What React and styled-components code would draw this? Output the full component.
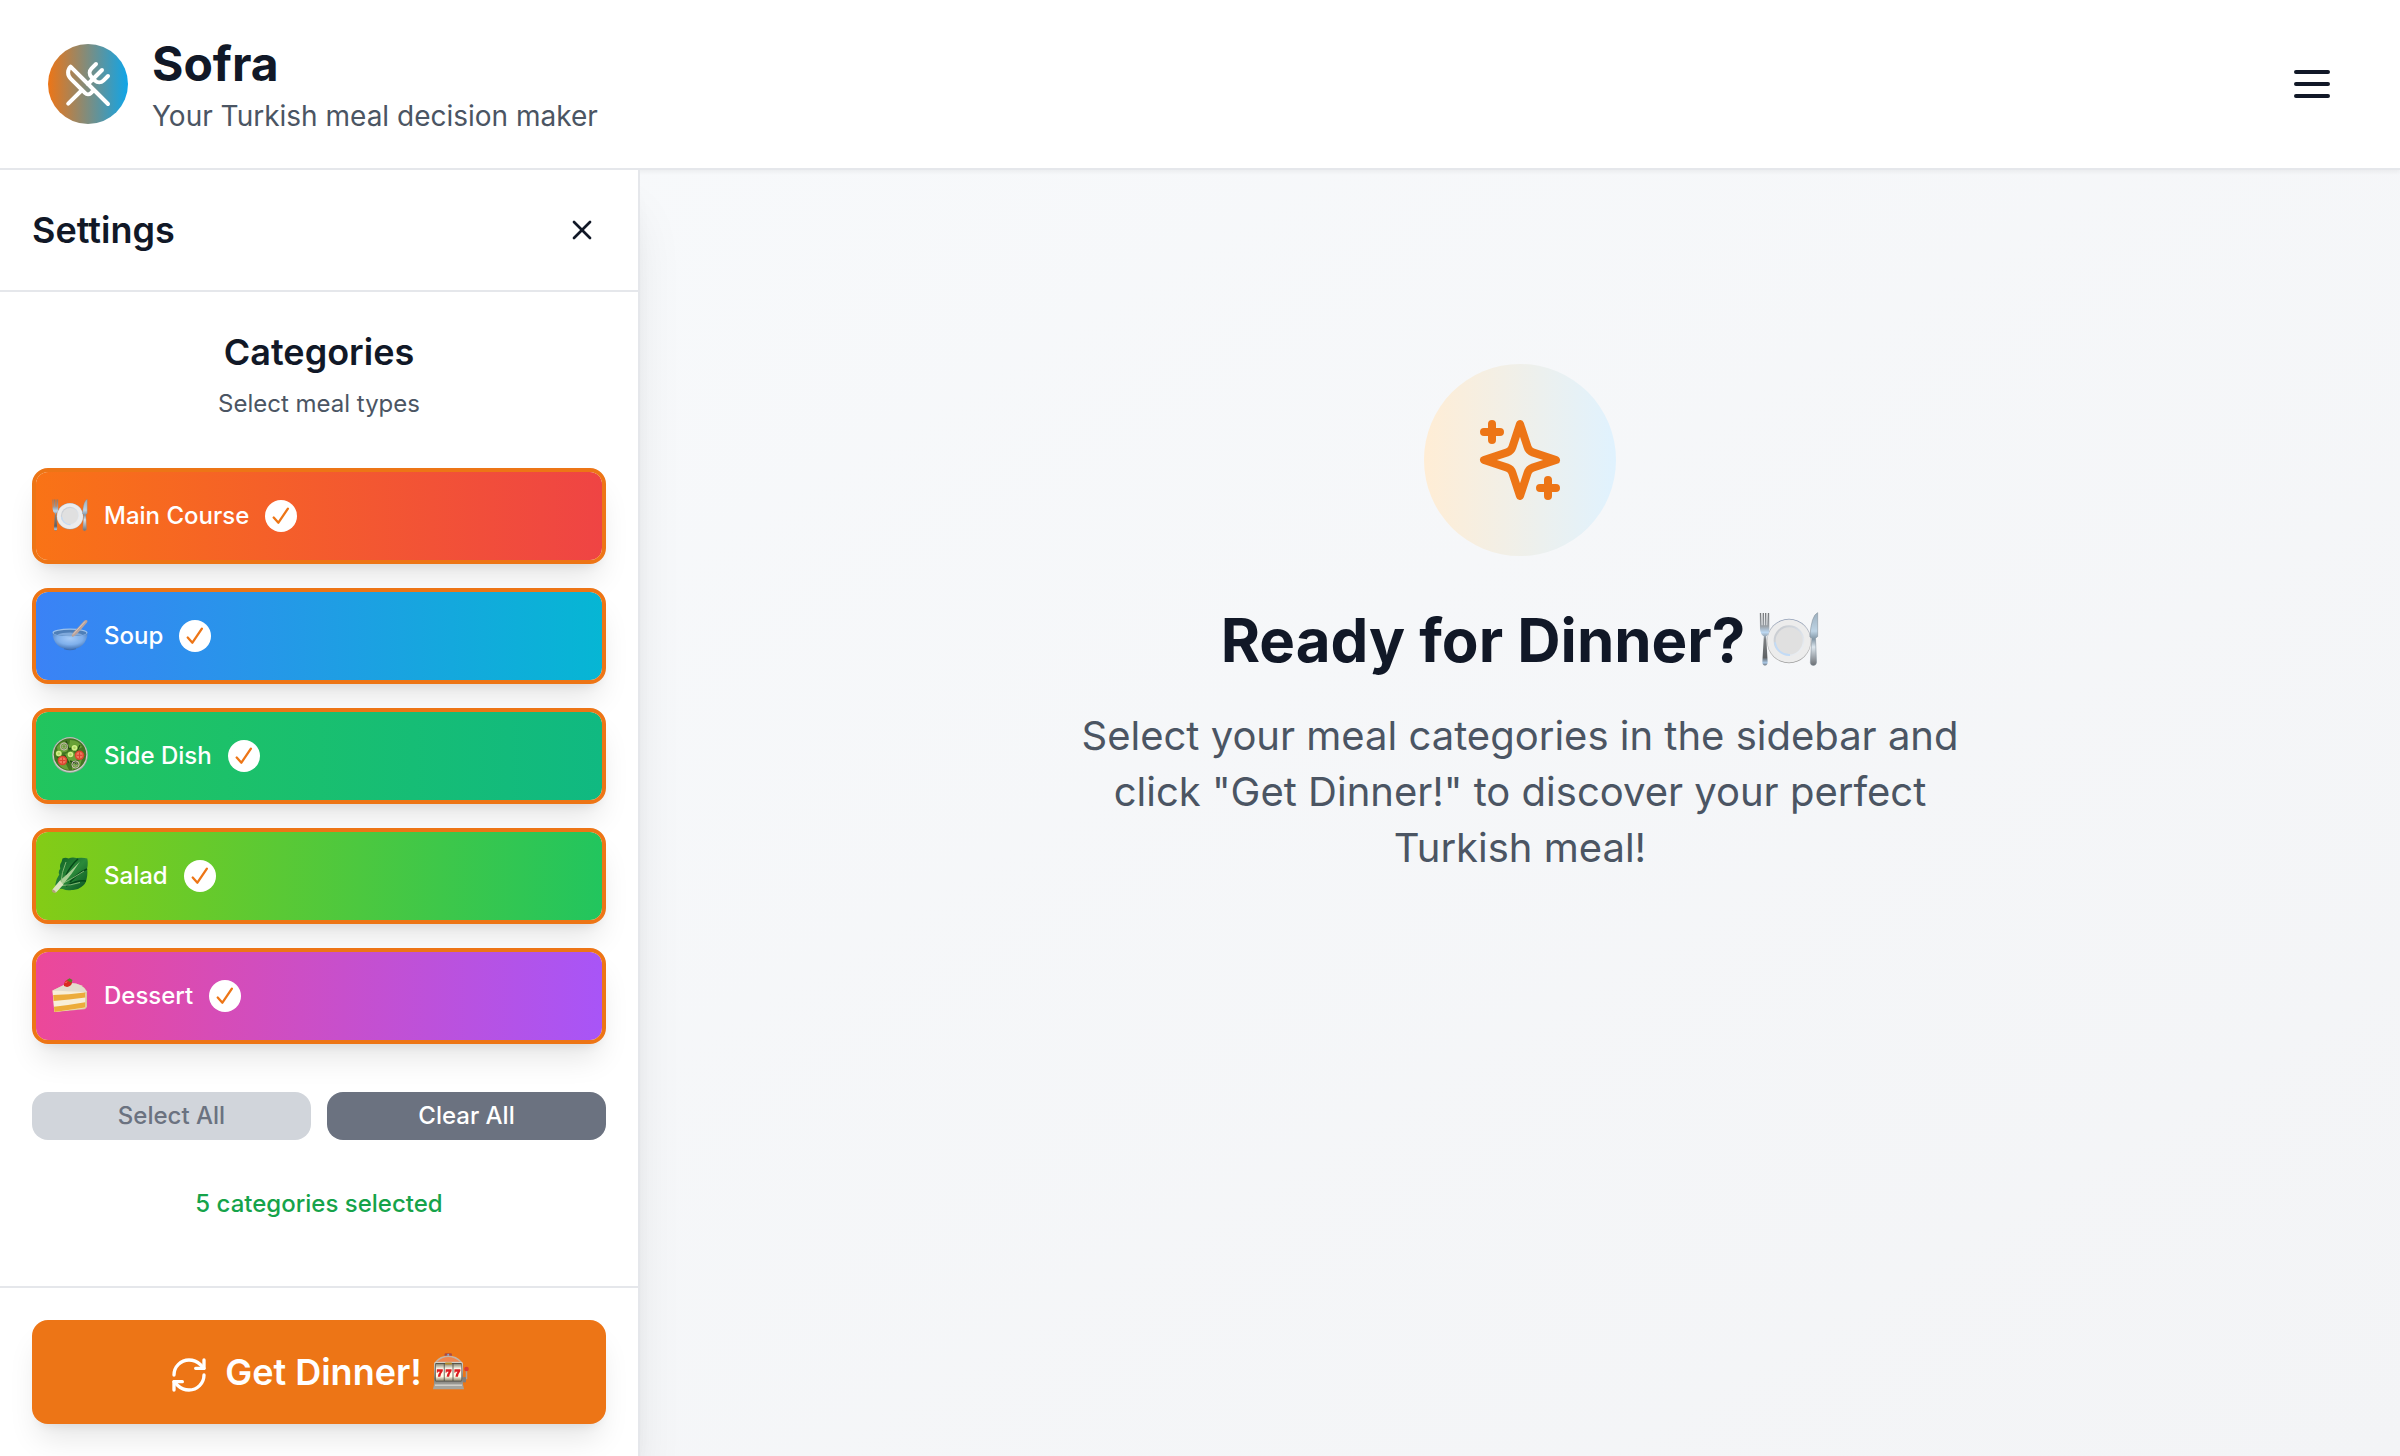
import React from "react";
import styled, { createGlobalStyle } from "styled-components";
import { UtensilsCrossed, X, RefreshCw } from "lucide-react";

const ORANGE = "#ed7516";
const INK = "#111827";
const LINE = "#e5e7eb";
const SHADOW_LG = "0 20px 30px -6px rgba(0, 0, 0, 0.1), 0 8px 12px -8px rgba(0, 0, 0, 0.1)";
const SHADOW_XL = "0 40px 50px -10px rgba(0, 0, 0, 0.1), 0 16px 20px -12px rgba(0, 0, 0, 0.1)";

const GlobalStyle = createGlobalStyle`
  *, *::before, *::after { box-sizing: border-box; }
  body {
    margin: 0;
    font-family: Inter, "Liberation Sans", sans-serif;
    color: ${INK};
    background: #f8fafc;
  }
  h1, h2, h3, p { margin: 0; }
  button { font: inherit; border: 0; cursor: pointer; }
  svg { display: block; flex-shrink: 0; }
`;

const Page = styled.div`
  display: flex;
  flex-direction: column;
  height: 1456px;
  overflow: hidden;
  background: linear-gradient(to bottom right, #f8fafc, #f3f4f6);
`;

const Header = styled.header`
  display: flex;
  align-items: center;
  justify-content: space-between;
  height: 170px;
  flex-shrink: 0;
  padding: 0 48px;
  background: #fff;
  border-bottom: 2px solid ${LINE};
  box-shadow: 0 2px 4px rgba(0, 0, 0, 0.05);
`;

const Brand = styled.div`
  display: flex;
  align-items: center;
  gap: 24px;
`;

const Logo = styled.div`
  display: grid;
  place-items: center;
  width: 80px;
  height: 80px;
  border-radius: 50%;
  color: #fff;
  background: linear-gradient(to right, ${ORANGE}, #0ea5e9);
`;

const Title = styled.h1`
  font-size: 48px;
  line-height: 64px;
  font-weight: 700;
`;

const Tagline = styled.p`
  font-size: 28px;
  line-height: 40px;
  color: #4b5563;
`;

const IconButton = styled.button`
  display: grid;
  place-items: center;
  padding: ${(p) => p.$pad}px;
  color: ${INK};
  background: transparent;
`;

const Body = styled.div`
  display: flex;
  flex: 1;
  min-height: 0;
`;

const Sidebar = styled.aside`
  display: flex;
  flex-direction: column;
  width: 640px;
  flex-shrink: 0;
  background: #fff;
  border-right: 2px solid ${LINE};
  box-shadow: ${SHADOW_XL};
`;

const SidebarHeader = styled.div`
  display: flex;
  align-items: center;
  justify-content: space-between;
  height: 122px;
  padding: 0 32px;
  border-bottom: 2px solid ${LINE};
`;

const SidebarTitle = styled.h2`
  font-size: 36px;
  line-height: 56px;
  font-weight: 600;
`;

const SidebarContent = styled.div`
  display: flex;
  flex-direction: column;
  flex: 1;
  padding: 32px 32px 0;
`;

const Intro = styled.div`
  text-align: center;
  margin-bottom: 48px;
`;

const IntroTitle = styled.h3`
  font-size: 36px;
  line-height: 56px;
  font-weight: 600;
`;

const IntroText = styled.p`
  margin-top: 8px;
  font-size: 24px;
  line-height: 32px;
  color: #4b5563;
`;

const CategoryList = styled.div`
  display: flex;
  flex-direction: column;
  gap: 24px;
`;

const CategoryCard = styled.button`
  display: flex;
  align-items: center;
  gap: 16px;
  height: 96px;
  padding: 0 16px;
  border: 4px solid ${ORANGE};
  border-radius: 16px;
  color: #fff;
  background: linear-gradient(to right, ${(p) => p.$from}, ${(p) => p.$to}) padding-box;
  box-shadow: ${SHADOW_LG};
`;

const CategoryIcon = styled.span`
  width: 36px;
  height: 36px;
  margin-bottom: 2px;
`;

const CategoryName = styled.span`
  font-size: 24px;
  line-height: 32px;
  font-weight: 500;
`;

const CheckBadge = styled.span`
  display: grid;
  place-items: center;
  width: 32px;
  height: 32px;
  border-radius: 50%;
  color: ${ORANGE};
  background: #fff;
`;

const Actions = styled.div`
  display: flex;
  gap: 16px;
  margin-top: 48px;
`;

const ActionButton = styled.button`
  flex: 1;
  height: 48px;
  padding: 0;
  border-radius: 16px;
  font-size: 24px;
  line-height: 32px;
  font-weight: 500;
  color: ${(p) => (p.$muted ? "#6b7280" : "#fff")};
  background: ${(p) => (p.$muted ? "#d1d5db" : "#6b7280")};
`;

const Count = styled.p`
  margin-top: 48px;
  text-align: center;
  font-size: 24px;
  line-height: 32px;
  font-weight: 500;
  color: #16a34a;
`;

const SidebarFooter = styled.div`
  padding: 32px;
  border-top: 2px solid ${LINE};
`;

const DinnerButton = styled.button`
  display: flex;
  align-items: center;
  justify-content: center;
  width: 100%;
  height: 104px;
  padding: 0;
  border-radius: 16px;
  font-size: 36px;
  line-height: 56px;
  font-weight: 600;
  color: #fff;
  background: ${ORANGE};
  box-shadow: ${SHADOW_LG};

  > svg:first-child { margin: 6px 16px 0 0; }
  > svg:last-child { margin: 0 0 2px 11px; }
`;

const Main = styled.main`
  display: flex;
  flex-direction: column;
  align-items: center;
  flex: 1;
  padding-top: 194px;
`;

const Spark = styled.div`
  display: grid;
  place-items: center;
  width: 192px;
  height: 192px;
  border-radius: 50%;
  color: ${ORANGE};
  background: linear-gradient(to right, #ffedd5, #e0f2fe);
`;

const Hero = styled.h2`
  display: flex;
  align-items: center;
  gap: 14px;
  margin-top: 48px;
  font-size: 60px;
  line-height: 72px;
  font-weight: 700;

  > svg { margin-bottom: 3px; }
`;

const Lead = styled.p`
  width: 896px;
  margin-top: 32px;
  text-align: center;
  font-size: 40px;
  line-height: 56px;
  color: #4b5563;
`;

function PlateEmoji({ size = 36 }) {
  return (
    <svg width={size} height={size} viewBox="0 0 36 36">
      <defs>
        <linearGradient id="metal" x1="0" y1="0" x2="0" y2="1">
          <stop offset="0" stopColor="#77797b" />
          <stop offset="0.25" stopColor="#9aa0a6" />
          <stop offset="0.37" stopColor="#bcd8f2" />
          <stop offset="0.5" stopColor="#7d8083" />
          <stop offset="0.85" stopColor="#5f6265" />
          <stop offset="0.95" stopColor="#a9c8e6" />
          <stop offset="1" stopColor="#6d7278" />
        </linearGradient>
        <linearGradient id="blade" x1="0" y1="0" x2="0" y2="1">
          <stop offset="0" stopColor="#9db0bf" />
          <stop offset="0.35" stopColor="#bdd3e4" />
          <stop offset="0.5" stopColor="#8296a5" />
          <stop offset="0.65" stopColor="#dce6ee" />
          <stop offset="1" stopColor="#6b6f74" />
        </linearGradient>
        <linearGradient id="rim" x1="0" y1="0" x2="0" y2="1">
          <stop offset="0" stopColor="#8f9db5" />
          <stop offset="0.5" stopColor="#c9c9c9" />
          <stop offset="1" stopColor="#9a9a9a" />
        </linearGradient>
        <linearGradient id="well" x1="0" y1="0" x2="1" y2="1">
          <stop offset="0" stopColor="#c4c6c9" />
          <stop offset="0.5" stopColor="#d6dde6" />
          <stop offset="1" stopColor="#f2f4f6" />
        </linearGradient>
      </defs>
      <circle cx="18" cy="19.2" r="13.3" fill="url(#rim)" />
      <circle cx="18" cy="19.2" r="12.9" fill="#ececec" />
      <circle cx="18" cy="19" r="9.2" fill="url(#well)" />
      <circle cx="18.1" cy="19.1" r="8.1" fill="#e0e0e0" />
      <path d="M9.600 20a8.600 8.600 0 0 0 9 7.600" stroke="#c2dbf6" strokeWidth="1.100" fill="none" />
      <g transform="translate(0 -1) scale(1 1.06)">
        <path
          d="M.5 3.2h.8l.3 7h.5l.1-7h.8l.1 7h.4l.1-7h.8l.1 7h.4l.4-7h.8l.1 9q0 3-1.900 4.200l.9 14.600q0 1.900-1.600 1.900T2 31l.9-14.600Q.9 15.200.600 12.200Z"
          fill="url(#metal)"
        />
        <path
          d="M35.200 3q-3.800 1.500-4.700 13.700l1.200.8-.9 13.700q.1 1.700 1.800 1.700t1.900-1.700l-.6-13.700 1.300-1Z"
          fill="url(#blade)"
          stroke="#7b8a96"
          strokeWidth=".3"
        />
      </g>
    </svg>
  );
}

function SoupEmoji() {
  return (
    <svg width="36" height="36" viewBox="0 0 36 36">
      <defs>
        <radialGradient id="bowl" cx=".5" cy=".35" r=".6">
          <stop offset="0" stopColor="#a6cbf8" />
          <stop offset="0.6" stopColor="#7fb0ec" />
          <stop offset="1" stopColor="#4d7dbd" />
        </radialGradient>
      </defs>
      <path d="M.5 15.500C.5 26 8 32.500 18 32.500S35.500 26 35.500 15.500Z" fill="url(#bowl)" />
      <ellipse cx="18" cy="15.500" rx="17.500" ry="4" fill="#9cc2ec" />
      <ellipse cx="18" cy="15.900" rx="16.300" ry="3.200" fill="#4f7fb8" />
      <path d="M5 17.600q13 3.200 26 0q-5-2-13-2T5 17.600Z" fill="#7fa9dc" />
      <path d="M19.500 18.500q1.500-3.500 6-7.500l6.500-7q1.800-1.800 3-.7t-.6 3L28.500 13Q24 18.500 20.500 20Z" fill="#b9a39b" />
      <path d="M21 17.500l5-5.500 7-7.500" stroke="#d8c5bd" strokeWidth="1" fill="none" />
      <path d="M12 31.300q6 2 12 0v1q-6 2-12 0Z" fill="#3f6daf" />
    </svg>
  );
}

function SaladEmoji() {
  const tomato = [[10.5, 23.5], [27.5, 18.3]];
  const cucumber = [[6.8, 16.5], [18.5, 17.5], [22.5, 10.7]];
  const onion = [[23.5, 27.5], [12, 9.5]];
  return (
    <svg width="36" height="36" viewBox="0 0 36 36">
      <circle cx="18" cy="18" r="17.900" fill="#9da49f" />
      <circle cx="18" cy="17.800" r="17.200" fill="#ccd2cb" />
      <circle cx="18" cy="17.500" r="16.300" fill="#427522" />
      <path d="M5 10q4-6 9-5l5 5-5 5-8 1ZM18 3q9 0 12 7l-6 4-7-4ZM13 17l8-3 5 8-9 4ZM20 28l10-6-2 7-8 4ZM6 26l8 1 3 6q-8-1-11-7Z" fill="#69a137" />
      <path d="M14 4l3 8 6-2M5 20l8-1 4 7M25 14l3-6M18 24l8 3" stroke="#254e15" strokeWidth="1.400" fill="none" />
      {onion.map(([x, y]) => (
        <g key={x} fill="none" stroke="#cbb3b8">
          <circle cx={x} cy={y} r="3.600" strokeWidth="1" />
          <circle cx={x} cy={y} r="1.800" strokeWidth=".6" />
        </g>
      ))}
      {cucumber.map(([x, y]) => (
        <g key={x}>
          <circle cx={x} cy={y} r="3.300" fill="#62a22c" />
          <circle cx={x} cy={y} r="2.800" fill="#d3ee8b" />
          <circle cx={x} cy={y} r="1.200" fill="#a8d65c" />
        </g>
      ))}
      {tomato.map(([x, y]) => (
        <g key={x}>
          <circle cx={x} cy={y} r="4.800" fill="#d9442f" />
          <circle cx={x} cy={y} r="3.300" fill="#ef745c" />
          <path d={`M${x - 3} ${y}h6M${x} ${y - 3}v6`} stroke="#d9442f" strokeWidth="1" />
        </g>
      ))}
    </svg>
  );
}

function LeafEmoji() {
  return (
    <svg width="36" height="36" viewBox="0 0 36 36">
      <defs>
        <linearGradient id="leaf" x1="0" y1="0" x2="1" y2="1">
          <stop offset="0" stopColor="#0c5a22" />
          <stop offset="0.5" stopColor="#2b8a3a" />
          <stop offset="1" stopColor="#075020" />
        </linearGradient>
      </defs>
      <path d="M10.500 1.500q3-1.500 6 0 4-1.800 8-.4 6-.8 10.800.3 1 5-.2 10 .8 6-.6 11-1 5-5.200 7.500-4 3.500-9.500 3-5 1-9-1l-6-.5-1.500-4q1-6 4-10-1.500-3 1-6-1-4 1.200-6.500Z" fill="url(#leaf)" />
      <path d="M26 2q-7 6-12 16M35 12q-9 4-17 13M34 24q-9-1-20 5" stroke="#064819" strokeWidth="1.500" fill="none" />
      <path d="M2 32.500L8.500 23Q17 16 28 4.500 20 17 11 27.500L5 34.500Z" fill="#a9cf96" />
      <path d="M9 25Q9.500 16 14 5M10.500 26.500Q20 22 32 14M9 28.500q10 0 19-3" stroke="#8bbd7b" strokeWidth=".9" fill="none" />
      <path d="M.5 32.500Q4 28 8 23.500q2 3 3.500 4Q8 31 4 35.500 0 35.500.5 32.500Z" fill="#dbe4bf" />
      <path d="M.4 32.300q2 .4 3.800 3.200-3 1-4-1Z" fill="#b49f78" />
    </svg>
  );
}

function CakeEmoji() {
  return (
    <svg width="36" height="36" viewBox="0 0 36 36">
      <path d="M.5 13.500L15 6.500Q30 5 35 14.500v15q-.5 2-2.500 2.700L2.500 35Z" fill="#dcc89e" />
      <path d="M.5 13.500L16 6Q30 5 35 15l-3.500 1Z" fill="#e4ddcc" />
      <path d="M.5 13.500l31 1.500 2 1.500-.4 14.500-30.800 4Z" fill="#f8efd8" />
      <path d="M1.200 18q15-.5 32-2.500l.1 5Q17 22.500 1.600 24ZM2 29.700q15-1.500 31.200-4.400l-.1 5.300Q17 33 2.400 35Z" fill="#ecac3a" />
      <path d="M12 9q-.5-5 4-6.500 4 0 4 3.500-1 3.500-5 4Z" fill="#d92c20" />
      <path d="M15 3l2.500-1.700 3 1.700-1 2.800-2-1Z" fill="#5f8128" />
      <path d="M13.500 6l1.500-1.500" stroke="#ff8b75" strokeWidth="1" />
    </svg>
  );
}

function SlotEmoji() {
  return (
    <svg width="36" height="37" viewBox="0 0 36 37">
      <defs>
        <linearGradient id="steel" x1="0" y1="0" x2="0" y2="1">
          <stop offset="0" stopColor="#d7d3ca" />
          <stop offset="0.7" stopColor="#77766f" />
          <stop offset="1" stopColor="#aaa9a5" />
        </linearGradient>
        <linearGradient id="reel" x1="0" y1="0" x2="0" y2="1">
          <stop offset="0" stopColor="#8a8570" />
          <stop offset="0.3" stopColor="#fffdf0" />
          <stop offset="0.75" stopColor="#fffbe6" />
          <stop offset="1" stopColor="#8e8770" />
        </linearGradient>
      </defs>
      <rect x="11.500" y=".3" width="7.500" height="3" rx="1.400" fill="#a94a45" />
      <circle cx="15.200" cy="1.800" r="1" fill="#77a9d8" />
      <path d="M2 9Q7 2.600 15.200 2.600T29 9v3H2Z" fill="#c3b3a6" />
      <path d="M4 8.700Q9 4 15.200 4T27 8.700Z" fill="#ef8750" />
      <rect x="1" y="9" width="29" height="24" rx="1.500" fill="url(#steel)" />
      <rect x="2.200" y="10" width="26.600" height="18.500" rx="1" fill="#4c4a43" />
      {[2.8, 11.6, 20.4].map((x) => (
        <rect key={x} x={x} y="10.800" width="8" height="17" fill="url(#reel)" />
      ))}
      <rect x="12" y="9.500" width="7" height="2" rx=".8" fill="#b48a27" />
      {[3.8, 12.6, 21.4].map((x) => (
        <path key={x} d={`M${x} 16.200h6v1.800q-2.200 2.800-2.500 5.800h-2.500q.3-2.800 2.100-5h-2.200v1h-.9Z`} fill="#dc1c20" />
      ))}
      <path d="M1 31.500h29l1 4.800H0Z" fill="#a5a49e" />
      <path d="M2 31.500h27v1.500H2Z" fill="#d0cec8" />
      <path d="M30.500 25.500h3V18" stroke="#aba39e" strokeWidth="1.500" fill="none" />
      <rect x="30" y="24" width="3" height="5.500" rx="1" fill="#817d7b" />
      <circle cx="33.500" cy="16" r="2.300" fill="#dd3b30" />
    </svg>
  );
}

const CATEGORIES = [
  { name: "Main Course", Icon: PlateEmoji, from: "#f97316", to: "#ef4444" },
  { name: "Soup", Icon: SoupEmoji, from: "#3b82f6", to: "#06b6d4" },
  { name: "Side Dish", Icon: SaladEmoji, from: "#22c55e", to: "#10b981" },
  { name: "Salad", Icon: LeafEmoji, from: "#84cc16", to: "#22c55e" },
  { name: "Dessert", Icon: CakeEmoji, from: "#ec4899", to: "#a855f7" },
];

const CheckIcon = () => (
  <svg width="32" height="32" viewBox="0 0 32 32" fill="none" stroke="currentColor" strokeLinecap="round" strokeLinejoin="round">
    <path d="M8.700 17.500L13.400 22.700L22.900 8.700" strokeWidth="2.300" />
  </svg>
);

const MenuIcon = () => (
  <svg width="48" height="48" viewBox="0 0 24 24" stroke="currentColor" strokeWidth="2" strokeLinecap="round">
    <path d="M4 6h16M4 12h16M4 18h16" />
  </svg>
);

const SparklesIcon = () => (
  <svg width="96" height="96" viewBox="0 0 24 24" fill="none" stroke="currentColor" strokeWidth="2" strokeLinecap="round" strokeLinejoin="round">
    <path d="m12 3-1.912 5.813a2 2 0 0 1-1.275 1.275L3 12l5.813 1.912a2 2 0 0 1 1.275 1.275L12 21l1.912-5.813a2 2 0 0 1 1.275-1.275L21 12l-5.813-1.912a2 2 0 0 1-1.275-1.275L12 3Z" />
    <path d="M5 3v4M19 17v4M3 5h4M17 19h4" />
  </svg>
);

export default function App() {
  return (
    <>
      <GlobalStyle />
      <Page>
        <Header>
          <Brand>
            <Logo>
              <UtensilsCrossed size={48} />
            </Logo>
            <div>
              <Title>Sofra</Title>
              <Tagline>Your Turkish meal decision maker</Tagline>
            </div>
          </Brand>
          <IconButton $pad={16} aria-label="Menu">
            <MenuIcon />
          </IconButton>
        </Header>
        <Body>
          <Sidebar>
            <SidebarHeader>
              <SidebarTitle>Settings</SidebarTitle>
              <IconButton $pad={8} aria-label="Close">
                <X size={32} />
              </IconButton>
            </SidebarHeader>
            <SidebarContent>
              <Intro>
                <IntroTitle>Categories</IntroTitle>
                <IntroText>Select meal types</IntroText>
              </Intro>
              <CategoryList>
                {CATEGORIES.map(({ name, Icon, from, to }) => (
                  <CategoryCard key={name} $from={from} $to={to}>
                    <CategoryIcon>
                      <Icon />
                    </CategoryIcon>
                    <CategoryName>{name}</CategoryName>
                    <CheckBadge>
                      <CheckIcon />
                    </CheckBadge>
                  </CategoryCard>
                ))}
              </CategoryList>
              <Actions>
                <ActionButton $muted>Select All</ActionButton>
                <ActionButton>Clear All</ActionButton>
              </Actions>
              <Count>5 categories selected</Count>
            </SidebarContent>
            <SidebarFooter>
              <DinnerButton>
                <RefreshCw size={40} />
                <span>Get Dinner!</span>
                <SlotEmoji />
              </DinnerButton>
            </SidebarFooter>
          </Sidebar>
          <Main>
            <Spark>
              <SparklesIcon />
            </Spark>
            <Hero>
              <span>Ready for Dinner?</span>
              <PlateEmoji size={60} />
            </Hero>
            <Lead>
              Select your meal categories in the sidebar and click "Get Dinner!" to discover your perfect Turkish meal!
            </Lead>
          </Main>
        </Body>
      </Page>
    </>
  );
}
